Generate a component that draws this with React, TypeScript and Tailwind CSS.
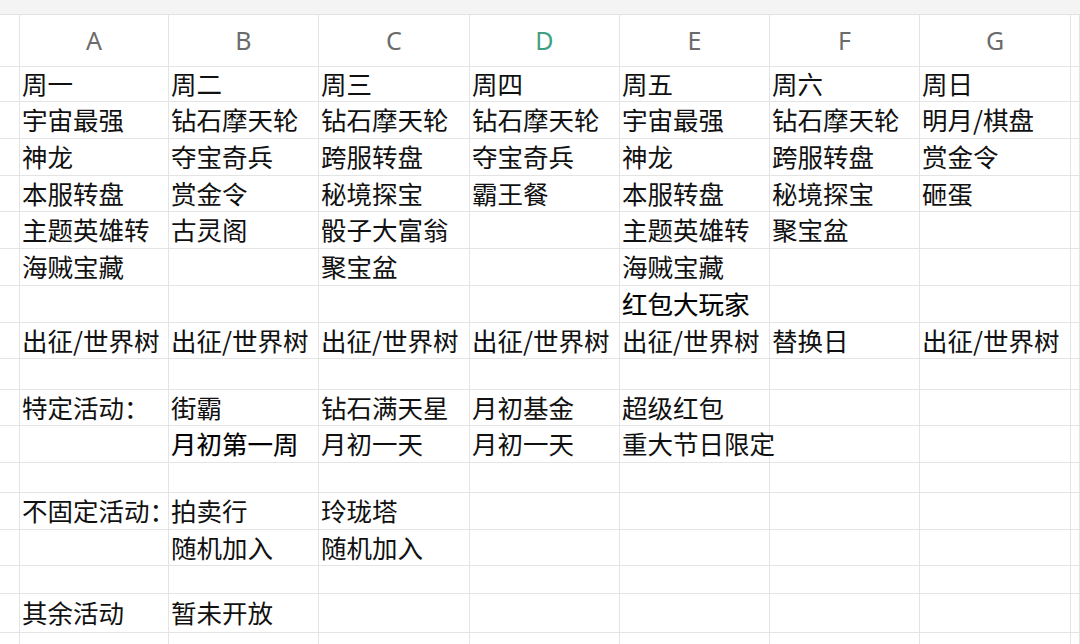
const cols = ["A", "B", "C", "D", "E", "F", "G"];

type Row = { h: string; cells: string[]; bold?: number[] };

const rows: Row[] = [
  { h: "h-[35px]", cells: ["周一", "周二", "周三", "周四", "周五", "周六", "周日"] },
  { h: "h-[37px]", cells: ["宇宙最强", "钻石摩天轮", "钻石摩天轮", "钻石摩天轮", "宇宙最强", "钻石摩天轮", "明月/棋盘"] },
  { h: "h-[37px]", cells: ["神龙", "夺宝奇兵", "跨服转盘", "夺宝奇兵", "神龙", "跨服转盘", "赏金令"] },
  { h: "h-[36px]", cells: ["本服转盘", "赏金令", "秘境探宝", "霸王餐", "本服转盘", "秘境探宝", "砸蛋"] },
  { h: "h-[37px]", cells: ["主题英雄转", "古灵阁", "骰子大富翁", "", "主题英雄转", "聚宝盆", ""] },
  { h: "h-[37px]", cells: ["海贼宝藏", "", "聚宝盆", "", "海贼宝藏", "", ""] },
  { h: "h-[37px]", cells: ["", "", "", "", "红包大玩家", "", ""], bold: [4] },
  { h: "h-[36px]", cells: ["出征/世界树", "出征/世界树", "出征/世界树", "出征/世界树", "出征/世界树", "替换日", "出征/世界树"] },
  { h: "h-[31px]", cells: ["", "", "", "", "", "", ""] },
  { h: "h-[36px]", cells: ["特定活动：", "街霸", "钻石满天星", "月初基金", "超级红包", "", ""] },
  { h: "h-[37px]", cells: ["", "月初第一周", "月初一天", "月初一天", "重大节日限定", "", ""], bold: [1] },
  { h: "h-[30px]", cells: ["", "", "", "", "", "", ""] },
  { h: "h-[37px]", cells: ["不固定活动：", "拍卖行", "玲珑塔", "", "", "", ""] },
  { h: "h-[36px]", cells: ["", "随机加入", "随机加入", "", "", "", ""] },
  { h: "h-[28px]", cells: ["", "", "", "", "", "", ""] },
  { h: "h-[39px]", cells: ["其余活动", "暂未开放", "", "", "", "", ""] },
  { h: "h-[36px]", cells: ["", "", "", "", "", "", ""] },
];

const gridCols =
  "grid grid-cols-[20px_149px_150px_151px_150px_150px_150px_151px_1fr]";
const line = "border-r border-b border-[#e4e4e4]";

export default function App() {
  return (
    <div className="h-[644px] w-[1080px] overflow-hidden bg-white font-['Noto_Sans_CJK_SC',sans-serif] text-[#111111]">
      {/* toolbar strip above the sheet */}
      <div className="h-[15px] border-b border-[#e2e2e2] bg-[#f4f4f4]" />

      {/* column letters */}
      <div className={`${gridCols} h-[52px]`}>
        <div className={line} />
        {cols.map((c) => (
          <div
            key={c}
            className={`${line} flex items-center justify-center font-['Noto_Sans',sans-serif] text-[25px] ${
              c === "D" ? "text-[#3f9f80]" : "text-[#6b6b6b]"
            }`}
          >
            {c}
          </div>
        ))}
        <div className={line} />
      </div>

      {rows.map((r, i) => (
        <div key={i} className={`${gridCols} ${r.h}`}>
          <div className={line} />
          {r.cells.map((t, j) => (
            <div key={j} className={`${line} flex items-center pb-[2px] pl-[2px]`}>
              <span
                className={`relative z-10 whitespace-nowrap text-[25.5px] leading-none ${
                  r.bold?.includes(j) ? "text-black [-webkit-text-stroke:0.15px_#000]" : ""
                }`}
              >
                {t}
              </span>
            </div>
          ))}
          <div className={line} />
        </div>
      ))}
    </div>
  );
}
